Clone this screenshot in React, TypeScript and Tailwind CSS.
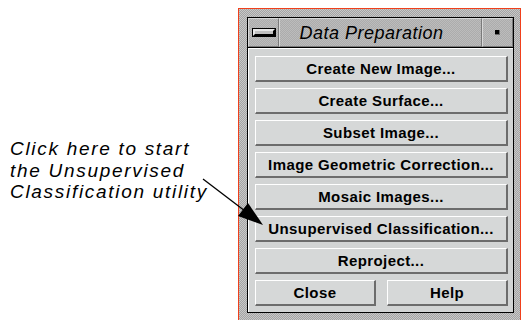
import React from 'react';

const items = [
  'Create New Image...',
  'Create Surface...',
  'Subset Image...',
  'Image Geometric Correction...',
  'Mosaic Images...',
  'Unsupervised Classification...',
  'Reproject...',
];

// Motif-style push button
function MotifButton({ label }: { label: string }) {
  return (
    <button className="h-[26px] w-full bg-[#d6d8d8] border-t border-l border-t-white border-l-white border-b-2 border-r-2 border-b-[#6c6c6c] border-r-[#6c6c6c] flex items-center justify-center text-[15px] font-bold tracking-[0.4px] text-black leading-none">
      {label}
    </button>
  );
}

export default function App() {
  return (
    <div
      className="relative w-[524px] h-[320px] overflow-hidden bg-white flex"
      style={{ fontFamily: '"Liberation Sans", Arial, sans-serif' }}
    >
      {/* Annotation text */}
      <div className="w-[238px] shrink-0 pl-[10px] pt-[138px]">
        <p className="text-[19px] italic leading-[21.5px] tracking-[1.7px] text-black">
          Click here to start
          <br />
          the Unsupervised
          <br />
          Classification utility
        </p>
      </div>

      {/* Window frame */}
      <div className="mt-[8px] w-[283px] h-[330px] shrink-0 border border-[#f0401c] pt-[8px] pl-[8px] pr-[6px] bg-[repeating-conic-gradient(#a4a4a4_0_25%,#c8c8c8_0_50%)] bg-[length:2px_2px]">
        <div className="w-[267px] border border-black flex flex-col">
          {/* Title bar */}
          <div className="h-[30px] flex border-b border-black bg-[repeating-conic-gradient(#acacac_0_25%,#bcbcbc_0_50%)] bg-[length:2px_2px]">
            <div className="w-[31px] border-t border-l border-t-[#d8d8d8] border-l-[#d8d8d8] border-r border-b border-r-[#7a7a7a] border-b-[#7a7a7a] flex items-center justify-center">
              <div className="w-[22px] h-[7px] border-2 border-black bg-[#c0c0c0] border-t-[#e8e8e8] border-l-[#e8e8e8] outline outline-1 outline-black" />
            </div>
            <div className="flex-1 border-t border-l border-t-[#d8d8d8] border-l-[#d8d8d8] border-r border-b border-r-[#7a7a7a] border-b-[#7a7a7a] flex items-center justify-center pr-[18px]">
              <span className="text-[18px] italic tracking-[0.5px] text-black leading-none">
                Data Preparation
              </span>
            </div>
            <div className="w-[31px] border-t border-l border-t-[#d8d8d8] border-l-[#d8d8d8] border-r border-b border-r-[#7a7a7a] border-b-[#7a7a7a] flex items-center justify-center">
              <div className="w-[5px] h-[5px] bg-black border-r border-b border-[#6a6a6a]" />
            </div>
          </div>

          {/* Body */}
          <div className="bg-[#d2d4d4] border-t border-l border-white pt-[7px] pl-[6px] pr-[5px] pb-[6px] flex flex-col gap-[6px]">
            {items.map((item) => (
              <MotifButton key={item} label={item} />
            ))}
            <div className="grid grid-cols-2 gap-[11px]">
              <MotifButton label="Close" />
              <MotifButton label="Help" />
            </div>
          </div>
        </div>
      </div>

      {/* Pointer arrow */}
      <svg
        className="absolute left-0 top-0 pointer-events-none"
        width="524"
        height="320"
        viewBox="0 0 524 320"
      >
        <line x1="203" y1="179" x2="245" y2="211" stroke="black" strokeWidth="1.3" />
        <polygon points="263,225 238,216 248,203" fill="black" />
      </svg>
    </div>
  );
}
